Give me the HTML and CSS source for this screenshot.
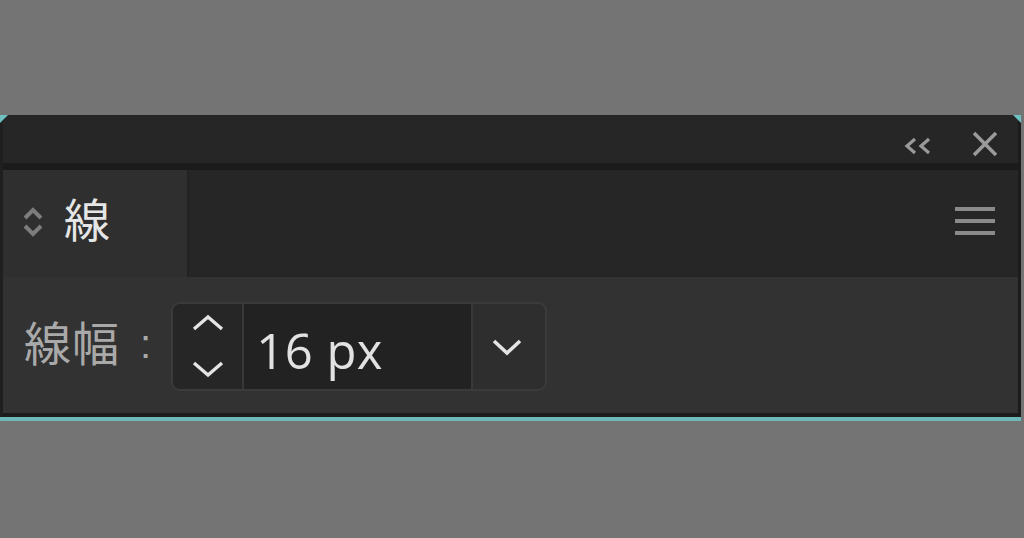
FILE: index.html
```html
<!DOCTYPE html>
<html lang="ja">
<head>
<meta charset="utf-8">
<link rel="stylesheet" href="styles.css">
</head>
<body>
<div class="panel">
  <span class="corner corner-left"></span>
  <span class="corner corner-right"></span>
  <div class="titlebar">
    <svg class="ico-collapse" width="30" height="20" viewBox="0 0 30 20"><path d="M12 3 L4 10 L12 17 M26 3 L18 10 L26 17" fill="none" stroke="#9a9a9a" stroke-width="3.2"/></svg>
    <svg class="ico-close" width="28" height="28" viewBox="0 0 28 28"><path d="M3 3 L25 25 M25 3 L3 25" fill="none" stroke="#9a9a9a" stroke-width="3.6"/></svg>
  </div>
  <div class="sep"></div>
  <div class="tabrow">
    <div class="tab">
      <svg class="ico-updown" width="22" height="36" viewBox="0 0 22 36"><path d="M3 14 L11 6 L19 14 M3 22 L11 30 L19 22" fill="none" stroke="#7d7d7d" stroke-width="4"/></svg>
      <span class="tab-label">線</span>
    </div>
    <div class="tab-rest">
      <svg class="ico-menu" width="42" height="30" viewBox="0 0 42 30"><path d="M1 3 H41 M1 15 H41 M1 27 H41" fill="none" stroke="#8a8a8a" stroke-width="4"/></svg>
    </div>
  </div>
  <div class="content">
    <span class="field-label">線幅</span>
    <span class="colon">:</span>
    <div class="spinner">
      <div class="stepper">
        <svg width="34" height="18" viewBox="0 0 34 18"><path d="M3 15 L17 3 L31 15" fill="none" stroke="#e4e4e4" stroke-width="3.4"/></svg>
        <svg width="34" height="18" viewBox="0 0 34 18"><path d="M3 3 L17 15 L31 3" fill="none" stroke="#e4e4e4" stroke-width="3.4"/></svg>
      </div>
      <div class="value">16 px</div>
      <div class="drop">
        <svg width="32" height="18" viewBox="0 0 32 18"><path d="M3 3 L16 15 L29 3" fill="none" stroke="#e4e4e4" stroke-width="3.6"/></svg>
      </div>
    </div>
  </div>
  <div class="bottom-dark"></div>
  <div class="bottom-teal"></div>
</div>
</body>
</html>
```

FILE: styles.css
```css
html, body {
  margin: 0;
  padding: 0;
  background: #747474;
  height: 100%;
}

body {
  padding-top: 115px;
  box-sizing: border-box;
}

.panel {
  position: relative;
  width: 1021px;
  display: flex;
  flex-direction: column;
  background: #262626;
  border-left: 3px solid #1f1f1f;
  border-right: 3px solid #1c1c1c;
  box-sizing: border-box;
  font-family: "Noto Sans CJK JP", "Noto Sans", sans-serif;
}

.corner {
  position: absolute;
  top: 0;
  width: 0;
  height: 0;
  border-style: solid;
}

.corner-left {
  left: -3px;
  border-width: 8px 8px 0 0;
  border-color: #6fc0c0 transparent transparent transparent;
}

.corner-right {
  right: -3px;
  border-width: 0 8px 8px 0;
  border-color: transparent #6fc0c0 transparent transparent;
}

.titlebar {
  height: 48px;
  display: flex;
  align-items: center;
  justify-content: flex-end;
  padding-right: 19px;
  padding-top: 10px;
  box-sizing: border-box;
  gap: 38px;
  background: #262626;
}

.ico-collapse { margin-top: 4px; }

.sep {
  height: 7px;
  background: #1b1b1b;
}

.tabrow {
  height: 107px;
  display: flex;
}

.tab {
  width: 184px;
  background: #2f2f2f;
  display: flex;
  align-items: center;
  padding-left: 19px;
  box-sizing: border-box;
  gap: 20px;
}

.ico-updown { margin-top: -4px; }

.tab-label {
  color: #e6e6e6;
  font-size: 46px;
  line-height: 1;
  margin-top: -14px;
}

.tab-rest {
  flex: 1;
  display: flex;
  align-items: center;
  justify-content: flex-end;
  padding-right: 22px;
  background: #262626;
  border-left: 2px solid #222;
  border-bottom: 1px solid #232323;
}

.ico-menu { margin-top: -4px; }

.content {
  height: 136px;
  background: #323232;
  display: flex;
  align-items: center;
  padding-left: 21px;
}

.field-label {
  color: #a9a9a9;
  font-size: 47px;
  line-height: 1;
  margin-top: -10px;
  letter-spacing: 1px;
}

.colon {
  color: #a9a9a9;
  font-size: 40px;
  font-family: "Liberation Sans", sans-serif;
  margin-left: 20px;
  margin-top: -2px;
}

.spinner {
  margin-left: 20px;
  height: 89px;
  width: 376px;
  box-sizing: border-box;
  border: 2px solid #3b3b3b;
  border-radius: 9px;
  display: flex;
  overflow: hidden;
  margin-top: 2px;
  background: #2e2e2e;
}

.stepper {
  width: 69px;
  background: #262626;
  display: flex;
  flex-direction: column;
  align-items: center;
  justify-content: center;
  gap: 28px;
  border-right: 2px solid #383838;
}

.value {
  width: 229px;
  background: #222222;
  color: #e2e2e2;
  font-family: "Open Sans", "Noto Sans", sans-serif;
  font-size: 49px;
  letter-spacing: 0.5px;
  display: flex;
  align-items: center;
  padding-left: 12px;
  box-sizing: border-box;
  padding-top: 8px;
  border-right: 2px solid #383838;
}

.drop {
  flex: 1;
  display: flex;
  align-items: center;
  justify-content: center;
  padding-top: 2px;
  padding-right: 4px;
}

.bottom-dark {
  height: 4px;
  background: #1c1c1c;
}

.bottom-teal {
  height: 4px;
  background: #6fb8b8;
  margin-left: -3px;
  margin-right: -3px;
}
```
